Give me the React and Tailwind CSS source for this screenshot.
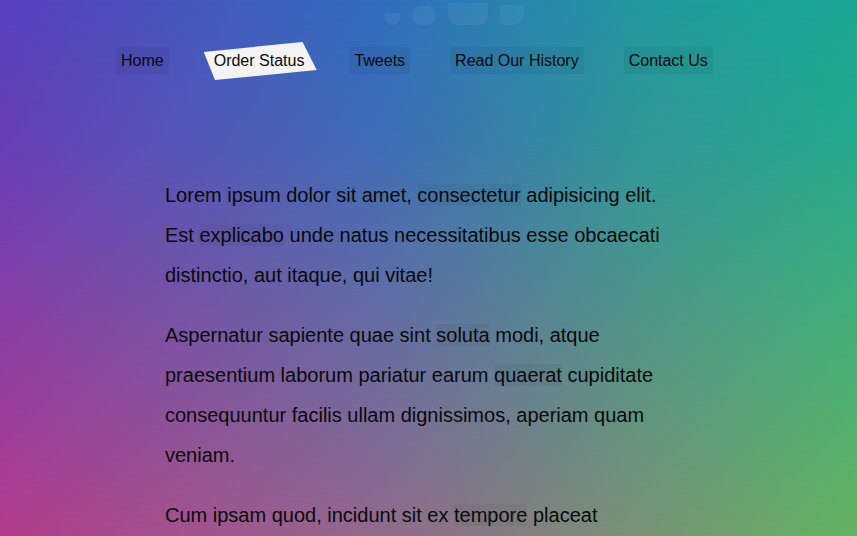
import React from "react";

const nav = ["Home", "Order Status", "Tweets", "Read Our History", "Contact Us"];

function Hl({ children }) {
  return <span className="bg-black/[0.04]">{children}</span>;
}

export default function App() {
  return (
    <div
      className="relative min-h-screen bg-fixed text-[#0a0a0a] bg-[linear-gradient(to_right,#5a40c0_0%,#2f6fbe_45%,#22999f_75%,#1aa894_100%)]"
      style={{ fontFamily: '"Liberation Sans", Arial, sans-serif' }}
    >
      <div className="pointer-events-none absolute inset-0 bg-fixed bg-[linear-gradient(to_right,#bb3c88_0%,#9a6a88_45%,#7f9270_75%,#6ab45c_100%)] [mask-image:linear-gradient(to_bottom,transparent_0%,rgba(0,0,0,0.15)_25%,rgba(0,0,0,0.55)_60%,black_100%)]" />
      <div className="pointer-events-none absolute left-[385px] top-[3px] flex items-end gap-[12px] opacity-[0.05]">
        <span className="h-[12px] w-[15px] rounded-b-full bg-white" />
        <span className="h-[19px] w-[24px] rounded-full bg-white" />
        <span className="h-[22px] w-[40px] rounded-b-[10px] bg-white" />
        <span className="h-[20px] w-[24px] rounded-br-[12px] bg-white" />
      </div>
      <div className="relative">
        <nav className="flex items-center gap-[40px] pl-[116px] pt-[47px] text-[16px]">
          {nav.map((item) =>
            item === "Order Status" ? (
              <div key={item} className="relative flex h-[27px] items-center px-[5px]">
                <span className="absolute left-[-5px] top-[-5px] h-[38px] w-[113px] bg-[#f3f3f3] [clip-path:polygon(0%_26%,87.5%_0%,100%_74%,10%_100%)]" />
                <span className="relative">{item}</span>
              </div>
            ) : (
              <div key={item} className="flex h-[27px] items-center bg-black/[0.05] px-[5px]">
                {item}
              </div>
            )
          )}
        </nav>
        <main className="ml-[165px] mt-[101px] w-[500px] text-[20px] leading-[40px]">
          <p>
            Lorem ipsum dolor sit amet, <Hl>consectetur</Hl> adipisicing elit. Est <Hl>explicabo</Hl> unde
            natus necessitatibus esse obcaecati distinctio, aut itaque, qui vitae!
          </p>
          <p className="mt-[20px]">
            Aspernatur sapiente quae sint <Hl>soluta</Hl> modi, atque praesentium laborum pariatur earum{" "}
            <Hl>quaerat</Hl> cupiditate consequuntur facilis ullam dignissimos, aperiam quam veniam.
          </p>
          <p className="mt-[20px]">
            Cum ipsam quod, incidunt sit ex <Hl>tempore</Hl> placeat voluptatum, doloremque vero quis
            architecto nisi ipsa.
          </p>
        </main>
      </div>
    </div>
  );
}
